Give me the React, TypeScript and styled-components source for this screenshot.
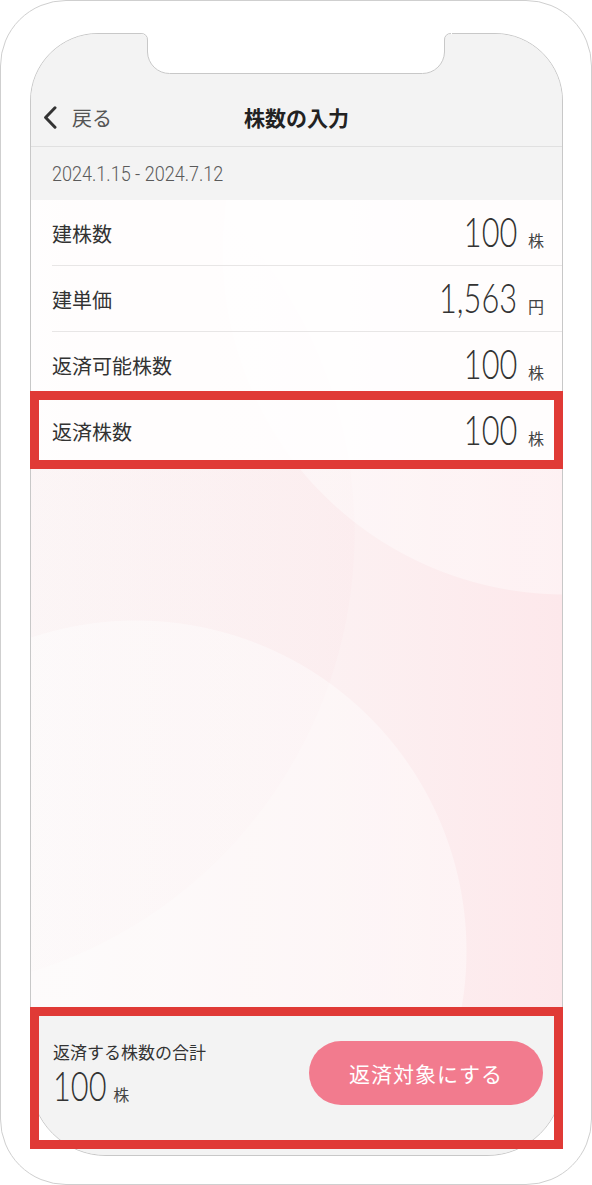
import React from "react";
import styled, { createGlobalStyle } from "styled-components";

const GlobalStyle = createGlobalStyle`
  html, body {
    margin: 0;
    padding: 0;
    background: #ffffff;
    overflow: hidden;
  }
  body {
    font-family: "Noto Sans CJK JP", "Noto Sans", sans-serif;
  }
  * { box-sizing: border-box; }
`;

const JP = `"Noto Sans CJK JP", "Noto Sans", sans-serif`;
const NUM = `Lato, Roboto, "Liberation Sans", sans-serif`;
const DATE = `Roboto, "Liberation Sans", sans-serif`;

const Frame = styled.div`
  width: 592px;
  height: 1185px;
  border: 1px solid #cfcfcf;
  border-radius: 66px;
  padding: 32px 28px 28px 29px;
  background: #ffffff;
`;

const Screen = styled.div`
  position: relative;
  height: 100%;
  border: 1px solid #c8c8c8;
  border-radius: 68px 68px 76px 76px;
  background: #f3f3f3;
  display: flex;
  flex-direction: column;
`;

const Notch = styled.svg`
  position: absolute;
  top: -2px;
  left: 110px;
  width: 311px;
  height: 44px;
  overflow: visible;
`;

const Nav = styled.header`
  flex: none;
  height: 113px;
  border-bottom: 1px solid #e0e0e0;
  border-radius: 67px 67px 0 0;
  background: #f3f3f3;
  display: grid;
  grid-template-columns: 1fr auto 1fr;
  align-items: end;
  padding: 0 12px 14px;
`;

const BackButton = styled.button`
  justify-self: start;
  display: flex;
  align-items: center;
  gap: 15px;
  height: 30px;
  background: none;
  border: 0;
  padding: 0;
  font-family: ${JP};
  font-size: 20px;
  color: #555555;
  cursor: pointer;
`;

const Title = styled.h1`
  margin: 0;
  font-family: ${JP};
  font-size: 21px;
  font-weight: 700;
  line-height: 30px;
  color: #222222;
`;

const DateBar = styled.div`
  flex: none;
  height: 53px;
  display: flex;
  align-items: center;
  padding-left: 21px;
  background: #f3f3f3;
`;

const DateText = styled.span`
  display: inline-block;
  font-family: ${DATE};
  font-size: 20.5px;
  font-weight: 300;
  color: #5a5a5a;
  transform: scaleX(0.88);
  transform-origin: left center;
  white-space: nowrap;
`;

const Content = styled.main`
  flex: 1;
  display: flex;
  flex-direction: column;
  background:
    radial-gradient(circle 343px at 534px 52px, rgba(255, 255, 255, 0.4) 99.7%, rgba(255, 255, 255, 0) 100%),
    radial-gradient(circle 331px at 105px 751px, rgba(255, 255, 255, 0.4) 99.7%, rgba(255, 255, 255, 0) 100%),
    radial-gradient(circle 460px at -136px 333px, rgba(245, 190, 200, 0.06) 99.8%, rgba(255, 255, 255, 0) 100%),
    linear-gradient(90deg, #fcf9f9 0%, #fcf1f2 55%, #fde8eb 100%);
`;

const Row = styled.div`
  position: relative;
  height: 66px;
  padding-left: 21px;
  background: rgba(255, 255, 255, 0.82);
`;

const RowInner = styled.div<{ $last?: boolean }>`
  height: 100%;
  display: flex;
  align-items: center;
  justify-content: space-between;
  padding: 2px 18px 0 0;
  border-bottom: 1px solid ${(p) => (p.$last ? "transparent" : "#e8e6e6")};
`;

const Label = styled.span`
  font-family: ${JP};
  font-size: 20px;
  line-height: 30px;
  color: #333333;
`;

const Value = styled.div`
  display: flex;
  align-items: baseline;
  gap: 11px;
  margin-top: -4px;
`;

const Num = styled.span<{ $left?: boolean }>`
  display: inline-block;
  font-family: ${NUM};
  font-size: 41px;
  font-weight: 300;
  line-height: 1;
  color: #333333;
  transform: scaleX(0.75);
  transform-origin: ${(p) => (p.$left ? "left" : "right")} center;
  margin-right: ${(p) => (p.$left ? "-11px" : "0")};
  white-space: nowrap;
`;

const Unit = styled.span`
  font-family: ${JP};
  font-size: 16px;
  color: #444444;
`;

const Spacer = styled.div`
  flex: 1;
`;

const BottomBar = styled.footer`
  position: relative;
  flex: none;
  height: 148px;
  background: #f3f3f3;
  border-radius: 0 0 75px 75px;
  display: flex;
  justify-content: space-between;
  align-items: flex-start;
  padding: 33px 19px 0 22px;
`;

const TotalBlock = styled.div`
  display: flex;
  flex-direction: column;
`;

const TotalLabel = styled.span`
  font-family: ${JP};
  font-size: 17px;
  line-height: 24px;
  color: #333333;
`;

const TotalValue = styled.div`
  display: flex;
  align-items: baseline;
  height: 40px;
  margin-top: 1px;
`;

const ActionButton = styled.button`
  width: 234px;
  height: 64px;
  margin-top: 1px;
  border: 0;
  border-radius: 32px;
  background: #f27b8e;
  color: #ffffff;
  font-family: ${JP};
  font-size: 21px;
  letter-spacing: 1px;
  cursor: pointer;
`;

const Highlight = styled.div<{ $top: number; $bottom: number }>`
  position: absolute;
  top: ${(p) => p.$top}px;
  bottom: ${(p) => p.$bottom}px;
  left: -1px;
  right: -1px;
  border: 9px solid #e03a36;
  pointer-events: none;
`;

type Item = { label: string; value: string; unit: string };

const items: Item[] = [
  { label: "建株数", value: "100", unit: "株" },
  { label: "建単価", value: "1,563", unit: "円" },
  { label: "返済可能株数", value: "100", unit: "株" },
  { label: "返済株数", value: "100", unit: "株" },
];

export default function App() {
  return (
    <>
      <GlobalStyle />
      <Frame>
        <Screen>
          <Nav>
            <BackButton>
              <svg width="14" height="23" viewBox="0 0 14 23" aria-hidden>
                <polyline
                  points="12,1.8 2.6,11.5 12,21.2"
                  fill="none"
                  stroke="#333"
                  strokeWidth="3"
                  strokeLinecap="round"
                  strokeLinejoin="round"
                />
              </svg>
              戻る
            </BackButton>
            <Title>株数の入力</Title>
            <div />
          </Nav>
          <DateBar>
            <DateText>2024.1.15 - 2024.7.12</DateText>
          </DateBar>
          <Content>
            {items.map((it, i) => (
              <Row key={it.label}>
                <RowInner $last={i === items.length - 1}>
                  <Label>{it.label}</Label>
                  <Value>
                    <Num>{it.value}</Num>
                    <Unit>{it.unit}</Unit>
                  </Value>
                </RowInner>
                {i === items.length - 1 && <Highlight $top={-7} $bottom={-5} />}
              </Row>
            ))}
            <Spacer />
          </Content>
          <BottomBar>
            <TotalBlock>
              <TotalLabel>返済する株数の合計</TotalLabel>
              <TotalValue>
                <Num $left>100</Num>
                <Unit>株</Unit>
              </TotalValue>
            </TotalBlock>
            <ActionButton>返済対象にする</ActionButton>
            <Highlight $top={0} $bottom={6} />
          </BottomBar>
          <Notch viewBox="0 0 311 44" aria-hidden>
            <path
              d="M0 0 L311 0 L311 2.5 A6 6 0 0 0 303.5 8.5 L303.5 20 A22 22 0 0 1 281.5 42 L28.5 42 A22 22 0 0 1 6.5 20 L6.5 8.5 A6 6 0 0 0 0 2.5 Z"
              fill="#ffffff"
            />
            <path
              d="M0 1.5 A6 6 0 0 1 6.5 8 L6.5 20 A22 22 0 0 0 28.5 41.5 L281.5 41.5 A22 22 0 0 0 303.5 20 L303.5 8 A6 6 0 0 1 310 1.5"
              fill="none"
              stroke="#c8c8c8"
              strokeWidth="1"
            />
          </Notch>
        </Screen>
      </Frame>
    </>
  );
}
